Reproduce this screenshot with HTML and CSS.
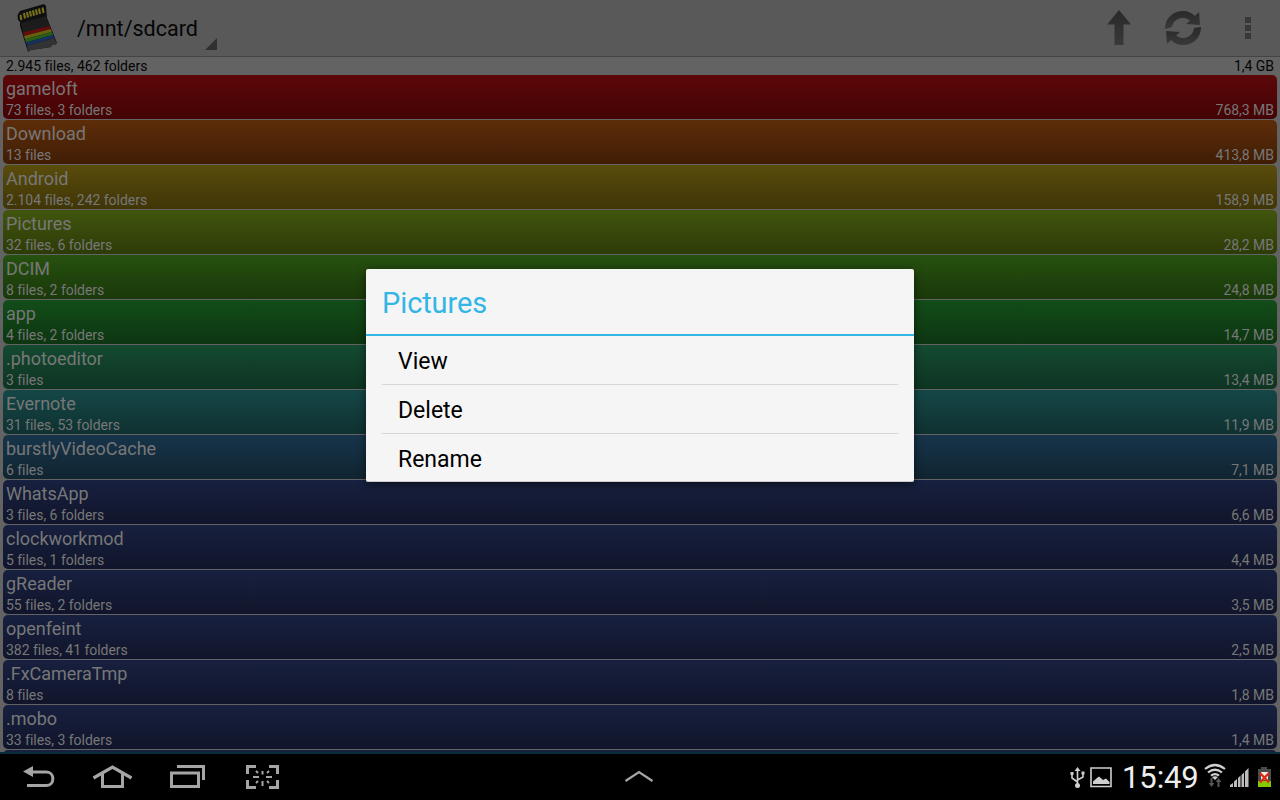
FILE: index.html
```html
<!DOCTYPE html>
<html lang="en">
<head>
<meta charset="utf-8">
<title>Disk usage</title>
<link rel="stylesheet" href="styles.css">
</head>
<body>
<div class="screen">
<header class="bar">
  <svg class="sd" width="44" height="54" viewBox="0 0 44 54">
    <path d="M1.500 15L4 11L28 4L30 6L31 18L41 43L39 45L36 45L35 47L15 50L12 52L4 26L4 22L2 20Z" fill="#0f0f0f"/>
    <path d="M5 23L30 16L34 27L7 33Z" fill="#1c1c1c"/>
    <path d="M7 32.500L33.500 26L34.700 29L8 36Z" fill="#650d0d"/>
    <path d="M8 36L34.700 29L35.900 32L9 39.300Z" fill="#69600f"/>
    <path d="M9 39.300L35.900 32L37.100 35L10 42.600Z" fill="#255d19"/>
    <path d="M10 42.600L37.100 35L38.200 38L11 45.800Z" fill="#16305f"/>
    <path d="M11 45.800L38.200 38L40.800 43L39 45L36 45L35 47L15 50L12 52Z" fill="#333335"/>
    <path d="M4.500 15l.8 5M8 13l1 5.500M11 12l1 5.500M14 11l1 5.500M17 10.200l1 5.500M20 9.400l1 5.500M23 8.500l1 5.500M26.500 7.500l1 5.500" stroke="#77701c" stroke-width="2.100"/>
  </svg>
  <span class="path">/mnt/sdcard</span>
  <svg class="corner" width="12" height="12" viewBox="0 0 12 12"><path d="M12 0V12H0Z" fill="#303030"/></svg>
  <div class="actions">
    <svg width="26" height="38" viewBox="0 0 26 38"><defs><linearGradient id="metal" x1="0" y1="0" x2="0" y2="1"><stop offset="0" stop-color="#292929"/><stop offset="1" stop-color="#393939"/></linearGradient></defs><path d="M13 1L25 15.500H17.500V36H8.500V15.500H1Z" fill="url(#metal)"/></svg>
    <svg class="refresh" width="38" height="38" viewBox="0 0 38 38" fill="url(#metal)"><path d="M1 20C1 9 9 2 19 2C24 2 28 4 31 7L35 3L36 16L22 15L26 11.500C19 6 9 10 8 18Z"/><path d="M37 18C37 29 29 36 19 36C14 36 10 34 7 31L3 35L2 22L16 23L12 26.500C19 32 29 28 30 19Z"/></svg>
    <svg class="more" width="6" height="22" viewBox="0 0 6 22" fill="#383838"><path d="M0 0h6v6H0zM0 8h6v6H0zM0 16h6v6H0z"/></svg>
  </div>
</header>
<main class="list">
  <div class="summary"><span>2.945 files, 462 folders</span><span>1,4 GB</span></div>
  <div class="row red"><b>gameloft</b><p><span>73 files, 3 folders</span><span>768,3 MB</span></p></div>
  <div class="row orange"><b>Download</b><p><span>13 files</span><span>413,8 MB</span></p></div>
  <div class="row yellow"><b>Android</b><p><span>2.104 files, 242 folders</span><span>158,9 MB</span></p></div>
  <div class="row lime"><b>Pictures</b><p><span>32 files, 6 folders</span><span>28,2 MB</span></p></div>
  <div class="row grass"><b>DCIM</b><p><span>8 files, 2 folders</span><span>24,8 MB</span></p></div>
  <div class="row green"><b>app</b><p><span>4 files, 2 folders</span><span>14,7 MB</span></p></div>
  <div class="row jade"><b>.photoeditor</b><p><span>3 files</span><span>13,4 MB</span></p></div>
  <div class="row teal"><b>Evernote</b><p><span>31 files, 53 folders</span><span>11,9 MB</span></p></div>
  <div class="row steel"><b>burstlyVideoCache</b><p><span>6 files</span><span>7,1 MB</span></p></div>
  <div class="row"><b>WhatsApp</b><p><span>3 files, 6 folders</span><span>6,6 MB</span></p></div>
  <div class="row"><b>clockworkmod</b><p><span>5 files, 1 folders</span><span>4,4 MB</span></p></div>
  <div class="row"><b>gReader</b><p><span>55 files, 2 folders</span><span>3,5 MB</span></p></div>
  <div class="row"><b>openfeint</b><p><span>382 files, 41 folders</span><span>2,5 MB</span></p></div>
  <div class="row"><b>.FxCameraTmp</b><p><span>8 files</span><span>1,8 MB</span></p></div>
  <div class="row"><b>.mobo</b><p><span>33 files, 3 folders</span><span>1,4 MB</span></p></div>
  <div class="row next"></div>
</main>
<footer class="nav">
  <svg width="300" height="46" viewBox="0 0 300 46" fill="none" stroke="#a5a5a5" stroke-width="3">
    <path d="M31 18H46.500C55 18 55 31.500 46.500 31.500H27"/><path d="M23 17.500L33 12V23Z" fill="#a5a5a5" stroke="none"/>
    <path d="M93.500 24L112.500 13L131.500 24" stroke-width="3.200"/><path d="M102.500 20V32.500H122.500V20"/>
    <path d="M171.500 19H198.500V32.500H171.500Z"/><path d="M177 12.500H203.500V26"/>
    <path d="M247.500 20V12.500H256M269 12.500H277.500V20M277.500 26V33.500H269M256 33.500H247.500V26"/>
    <path d="M262.500 17V20.500M262.500 27V32M253 23H259M266 23H272M256 17l2 2M269 17l-2 2M256 29l2-2M269 29l-2-2" stroke-width="2"/>
  </svg>
  <svg class="chevron" width="30" height="14" viewBox="0 0 30 14"><path d="M1.500 12L15 3L28.500 12" fill="none" stroke="#a5a5a5" stroke-width="2.200"/></svg>
  <div class="status">
    <svg width="44" height="24" viewBox="0 0 44 24" fill="none" stroke="#cfcfcf" stroke-width="1.600">
      <path d="M8.500 4V20M3 8V12L8.500 16M14 8V11L8.500 14"/><path d="M8.500 1L11.500 5H5.500ZM1.500 6H4.500V9H1.500ZM12.500 5.500H15.500V8.500H12.500Z" fill="#cfcfcf" stroke="none"/><circle cx="8.500" cy="19.500" r="2.500" fill="#cfcfcf" stroke="none"/>
      <path d="M22 2H42V20.500H22Z"/><path d="M24 18V15.500L28 12L30 10.500L34 14L37 12.500L40.500 16V18Z" fill="#cfcfcf" stroke="none"/>
    </svg>
    <time>15:49</time>
    <svg width="70" height="26" viewBox="0 0 70 26">
      <path d="M1 6Q11 -2 21 6M4 9.500Q11 4 18 9.500M7 12.700Q11 9.500 15 12.700" fill="none" stroke="#cfcfcf" stroke-width="2.200"/>
      <path d="M8 14Q11 12.500 14 14L11 17Z" fill="#cfcfcf"/>
      <path d="M7.500 15V22M14.500 24V18" stroke="#555" stroke-width="2"/><path d="M4.500 20H10.500L7.500 24ZM11.500 19H17.500L14.500 15Z" fill="#555"/>
      <path d="M26 24V22L29 20V24ZM30 24V18.500L33 16V24ZM34 24V15L36.500 12.500V24ZM37.500 24V12L40 9.500V24ZM41 24V8.500L44.500 5V24Z" fill="#bdbdbd"/>
      <path d="M57 4H63V6H67V24H54V6H57Z" fill="#4b4b4b"/><path d="M54 18H67V24H54Z" fill="#84c900"/><path d="M57 9H64V17H57Z" fill="#eee"/>
      <path d="M56 10L65 19.500M65 10L56 19.500" stroke="#df2d12" stroke-width="2.500"/>
    </svg>
  </div>
</footer>
<section class="dialog">
  <h1>Pictures</h1>
  <ul><li>View</li><li>Delete</li><li>Rename</li></ul>
</section>
</div>
</body>
</html>
```
FILE: styles.css
```css
* { box-sizing: border-box; margin: 0; padding: 0; }
body { font-family: Roboto, sans-serif; background: #000; }
svg { display: block; flex: none; }
.screen { width: 1280px; height: 800px; overflow: hidden; position: relative; display: flex; flex-direction: column; background: #666; }
.bar { height: 57px; flex: none; display: flex; align-items: center; padding-left: 16px; background: #595959; border-bottom: 1px solid #444; }
.sd { align-self: flex-start; }
.path { margin-left: 17px; padding-top: 2px; font-size: 21.5px; line-height: 28px; width: 120px; white-space: nowrap; color: #050505; }
.corner { margin: 31px 0 0 8px; }
.actions { margin-left: auto; padding-right: 29px; display: flex; align-items: center; }
.refresh { margin-left: 32px; }
.more { margin-left: 43px; }
.list { height: 697px; flex: none; padding: 0 3px; overflow: hidden; display: flex; flex-direction: column; gap: 1px; background: #636363; border-bottom: 2px solid #0b2b3a; }
.summary { height: 17px; flex: none; padding: 1px 3px 0; display: flex; justify-content: space-between; font-size: 14px; line-height: 17px; letter-spacing: -.02px; color: #050505; }
.row { --top: #17203f; --end: #11152b; height: 44px; flex: none; padding: 4px 3px 0; border-radius: 5px; color: #777; background: linear-gradient(var(--top), var(--end)); }
.row b { display: block; font-size: 18px; line-height: 20px; height: 22px; font-weight: 400; letter-spacing: -.02px; }
.row p { display: flex; justify-content: space-between; font-size: 14px; line-height: 18px; letter-spacing: -.03px; }
.red { --top: #5d0709; --end: #430304; }
.orange { --top: #5d2d09; --end: #401d05; }
.yellow { --top: #5a4c0c; --end: #3f3507; }
.lime { --top: #41550e; --end: #2d3b08; }
.grass { --top: #26510f; --end: #1a380a; }
.green { --top: #124d19; --end: #0d3511; }
.jade { --top: #144a31; --end: #0e3322; }
.teal { --top: #154747; --end: #0f3131; }
.steel { --top: #17344a; --end: #102430; }
.nav { height: 46px; flex: none; display: flex; background: #000; }
.chevron { margin: 15px 0 0 324px; }
.status { margin-left: auto; padding-right: 6px; display: flex; align-items: flex-start; }
.status svg { margin-top: 12px; }
.status svg:last-child { margin-top: 9px; }
time { margin-left: 9px; width: 82px; font-size: 31px; line-height: 47px; letter-spacing: -.1px; color: #eee; }
.dialog { position: absolute; left: 366px; top: 269px; width: 548px; height: 213px; background: #f5f5f5; border-radius: 2px; box-shadow: 0 2px 9px rgba(0,0,0,.55); border-bottom: 1px solid #ccc; }
.dialog h1 { height: 67px; padding: 2px 16px 0; border-bottom: 2px solid #33b5e5; color: #33b5e5; font-size: 29px; line-height: 64px; letter-spacing: -.1px; font-weight: 400; }
.dialog ul { list-style: none; padding: 0 16px; }
.dialog li { height: 49px; padding-left: 16px; font-size: 23px; line-height: 52px; color: #000; border-bottom: 1px solid #d6d6d6; }
.dialog li:last-child { border: 0; height: 47px; }
```
